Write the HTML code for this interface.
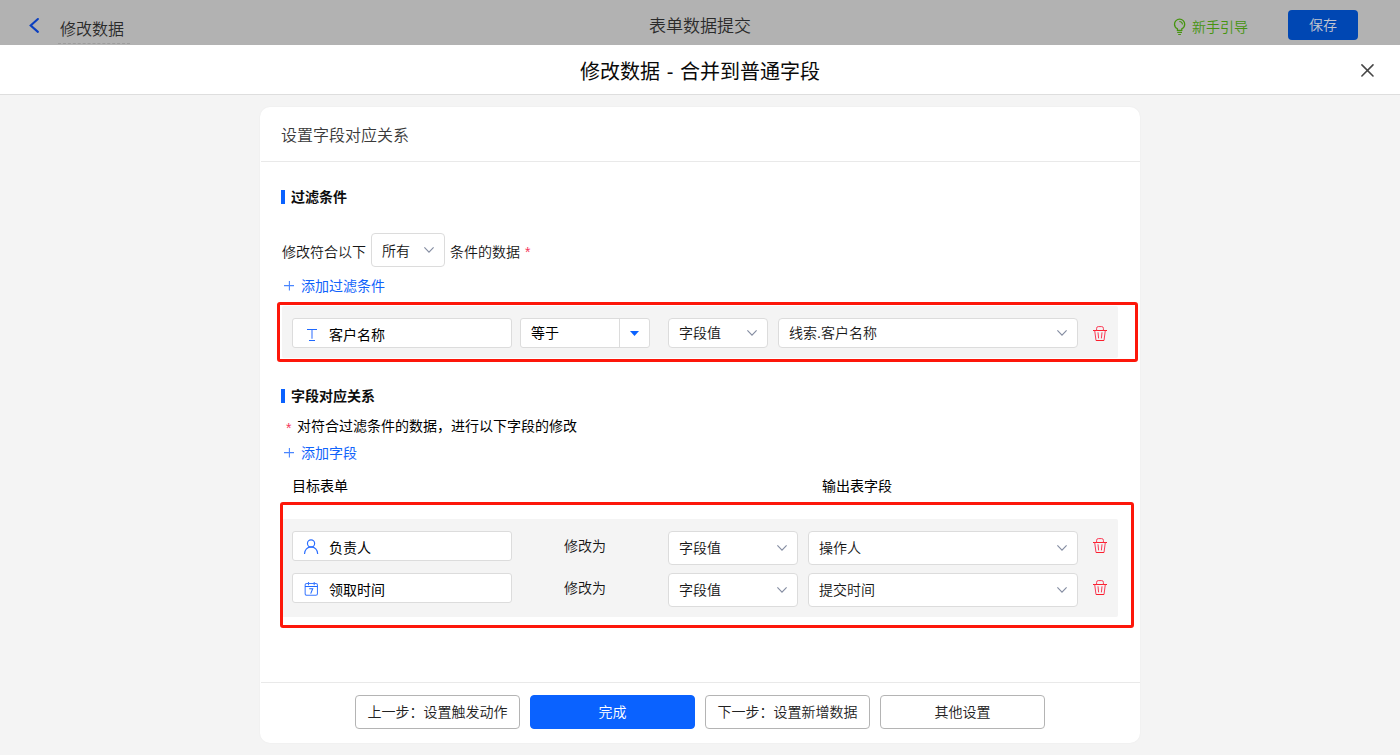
<!DOCTYPE html>
<html lang="zh-CN">
<head>
<meta charset="utf-8">
<title>修改数据 - 合并到普通字段</title>
<style>
*{box-sizing:border-box;margin:0;padding:0}
html,body{width:1400px;height:755px;overflow:hidden;background:#f4f4f4}
body{position:relative;font-family:"Liberation Sans","Noto Sans CJK SC",sans-serif;font-size:14px;color:#1f1f1f;font-weight:350}
.a{position:absolute}
.t{position:absolute;white-space:nowrap;line-height:20px;height:20px}
svg{position:absolute;overflow:visible}
/* top bar */
#bar{left:0;top:0;width:1400px;height:45px;background:#b2b2b2}
#mh{left:0;top:45px;width:1400px;height:50px;background:#fff;border-bottom:1px solid #dedede}
#card{left:260px;top:107px;width:880px;height:636px;background:#fff;border-radius:10px;box-shadow:0 0 2px rgba(0,0,0,.05)}
.hr{position:absolute;left:261px;width:879px;height:1px;background:#e9e9e9}
.bar4{position:absolute;left:281px;width:4px;height:14px;background:#0a62ff}
.b{font-weight:700;color:#0d0d0d}
.blue{color:#1163fb;font-weight:400}
.red{color:#f5365c}
.box{position:absolute;background:#fff;border:1px solid #dcdcdc;border-radius:4px}
.inp{border-radius:3px}
.hl{position:absolute;border:3px solid #fd170a;border-radius:3px}
.row{position:absolute;background:#f4f4f4;border-radius:2px}
.btn{position:absolute;top:695px;width:165px;height:34px;border:1px solid #b4b4b4;border-radius:4px;background:#fff;text-align:center;line-height:32px;color:#222;white-space:nowrap}
.btn.p{background:#0a62ff;border-color:#0a62ff;color:#fff}
.g{color:#161616}
</style>
</head>
<body>
<!-- underlying page header (dimmed) -->
<div id="bar" class="a"></div>
<svg style="left:29px;top:18px" width="10" height="15" viewBox="0 0 10 15"><path d="M8.9 1 L1.7 7.45 L8.9 13.9" fill="none" stroke="#0b3fc0" stroke-width="2.1" stroke-linecap="round"/></svg>
<div class="t" style="left:60px;top:20px;font-size:16px;color:#2a2a2a">修改数据</div>
<div class="a" style="left:58px;top:43px;width:72px;height:1px;border-top:1px dashed #9d9d9d"></div>
<div class="t" style="left:600px;width:200px;text-align:center;top:17px;font-size:17px;color:#2a2a2a">表单数据提交</div>
<svg style="left:1173px;top:18px" width="14" height="18" viewBox="0 0 14 18"><path d="M4.4 12.3 V10.8 C2.6 9.8 1.5 8.1 1.5 6.2 A5.1 5.1 0 0 1 11.7 6.2 C11.7 8.1 10.6 9.8 8.8 10.8 V12.3 Z" fill="none" stroke="#46940f" stroke-width="1.3"/><path d="M4.2 14.4 H9 M5.2 16.5 H7.9" fill="none" stroke="#46940f" stroke-width="1.1"/><path d="M6.3 3.5 A3.1 3.1 0 0 1 9.4 6.6" fill="none" stroke="#46940f" stroke-width="1.1"/></svg>
<div class="t" style="left:1192px;top:17px;color:#46940f">新手引导</div>
<div class="a" style="left:1288px;top:10px;width:70px;height:30px;border-radius:4px;background:#0047b3"></div>
<div class="t" style="left:1288px;width:70px;text-align:center;top:15px;color:#c3c6cf">保存</div>

<!-- modal header -->
<div id="mh" class="a"></div>
<div class="t" style="left:500px;width:400px;text-align:center;top:60px;height:24px;line-height:24px;font-size:20px;color:#0a0a0a;font-weight:400;word-spacing:1.1px">修改数据 - 合并到普通字段</div>
<svg style="left:1361px;top:63.5px" width="13" height="13" viewBox="0 0 13 13"><path d="M0.9 0.9 L12 12 M12 0.9 L0.9 12" fill="none" stroke="#474747" stroke-width="1.6" stroke-linecap="round"/></svg>

<!-- card -->
<div id="card" class="a"></div>
<div class="t" style="left:281px;top:126px;font-size:16px;color:#3a3a3a">设置字段对应关系</div>
<div class="hr" style="top:161px"></div>

<!-- section 1 -->
<div class="bar4" style="top:190px"></div>
<div class="t b" style="left:291px;top:187px">过滤条件</div>
<div class="t g" style="left:282px;top:241.5px">修改符合以下</div>
<div class="box" style="left:371px;top:233px;width:74px;height:34px"></div>
<div class="t g" style="left:382px;top:240.5px">所有</div>
<svg style="left:423.7px;top:247px" width="10" height="6" viewBox="0 0 10 6"><path d="M0.4 0.4 L5 5.1 L9.6 0.4" fill="none" stroke="#858da2" stroke-width="1.15"/></svg>
<div class="t g" style="left:450px;top:241.5px">条件的数据</div>
<div class="t red" style="left:525px;top:242px;font-size:14px">*</div>
<svg style="left:284px;top:281px" width="10" height="10" viewBox="0 0 10 10"><path d="M5.4 0 V9.6 M0 4.6 H10" fill="none" stroke="#4a86ff" stroke-width="1.1"/></svg>
<div class="t blue" style="left:301px;top:276px">添加过滤条件</div>

<div class="row" style="left:282px;top:306px;width:836px;height:52px"></div>
<div class="box inp" style="left:292px;top:318px;width:220px;height:30px"></div>
<svg style="left:307px;top:328px" width="10" height="13" viewBox="0 0 10 13"><path d="M0 1.5 H10 M2 12.5 H8" fill="none" stroke="#1f69ff" stroke-width="1"/><path d="M5 2 V10.8" fill="none" stroke="#5b8dff" stroke-width="1.3"/></svg>
<div class="t" style="left:329px;top:325px;color:#000;font-weight:400">客户名称</div>
<div class="box inp" style="left:520px;top:318px;width:130px;height:30px"></div>
<div class="a" style="left:619px;top:319px;width:1px;height:28px;background:#dcdcdc"></div>
<div class="t" style="left:531px;top:323px;color:#000;font-weight:400">等于</div>
<svg style="left:630px;top:331px" width="9" height="5" viewBox="0 0 9 5"><path d="M0 0 H9 L4.5 5 Z" fill="#0a62ff"/></svg>
<div class="box" style="left:668px;top:318px;width:100px;height:30px"></div>
<div class="t g" style="left:679px;top:323px">字段值</div>
<svg style="left:747.1px;top:330px" width="10" height="6" viewBox="0 0 10 6"><path d="M0.4 0.4 L5 5.1 L9.6 0.4" fill="none" stroke="#858da2" stroke-width="1.15"/></svg>
<div class="box" style="left:778px;top:318px;width:300px;height:30px"></div>
<div class="t g" style="left:789px;top:323px">线索.客户名称</div>
<svg style="left:1057.1px;top:330px" width="10" height="6" viewBox="0 0 10 6"><path d="M0.4 0.4 L5 5.1 L9.6 0.4" fill="none" stroke="#858da2" stroke-width="1.15"/></svg>
<svg class="trash" style="left:1093px;top:326px" width="14" height="15" viewBox="0 0 14 15"><path d="M0 4.5 H14 M3 14.5 H11" fill="none" stroke="#fb1f2c" stroke-width="1"/><path d="M1.7 4.5 L3 14.5 M11 14.5 L12.3 4.5 M3.6 4.5 V2.3 Q3.6 0.6 5.3 0.6 H8.7 Q10.4 0.6 10.4 2.3 V4.5 M5 6.3 L5.6 12.4 M9 6.3 L8.4 12.4" fill="none" stroke="#fb3a55" stroke-width="1"/></svg>
<div class="hl" style="left:277px;top:302px;width:861px;height:60px"></div>

<!-- section 2 -->
<div class="bar4" style="top:389px"></div>
<div class="t b" style="left:291px;top:386px">字段对应关系</div>
<div class="t red" style="left:286px;top:418px;font-size:14px">*</div>
<div class="t" style="left:297px;top:416px;color:#000;font-weight:400">对符合过滤条件的数据，进行以下字段的修改</div>
<svg style="left:284px;top:448px" width="10" height="10" viewBox="0 0 10 10"><path d="M5.4 0 V9.6 M0 4.6 H10" fill="none" stroke="#4a86ff" stroke-width="1.1"/></svg>
<div class="t blue" style="left:301px;top:443px">添加字段</div>
<div class="t" style="left:292px;top:476px;color:#000;font-weight:400">目标表单</div>
<div class="t" style="left:822px;top:476px;color:#000;font-weight:400">输出表字段</div>

<div class="row" style="left:282px;top:519px;width:836px;height:97.5px"></div>
<!-- row 1 -->
<div class="box inp" style="left:292px;top:531px;width:220px;height:30px"></div>
<svg style="left:304px;top:539px" width="15" height="16" viewBox="0 0 15 16"><circle cx="7.05" cy="4.5" r="3.6" fill="none" stroke="#2b6eff" stroke-width="1.15"/><path d="M0.5 15 A6.6 7.1 0 0 1 13.7 15" fill="none" stroke="#2b6eff" stroke-width="1.15"/></svg>
<div class="t" style="left:329px;top:538px;color:#000;font-weight:400">负责人</div>
<div class="t g" style="left:564px;top:536px">修改为</div>
<div class="box" style="left:668px;top:531px;width:130px;height:34px"></div>
<div class="t g" style="left:679px;top:538px">字段值</div>
<svg style="left:777.1px;top:545px" width="10" height="6" viewBox="0 0 10 6"><path d="M0.4 0.4 L5 5.1 L9.6 0.4" fill="none" stroke="#858da2" stroke-width="1.15"/></svg>
<div class="box" style="left:808px;top:531px;width:270px;height:34px"></div>
<div class="t g" style="left:819px;top:538px">操作人</div>
<svg style="left:1057.1px;top:545px" width="10" height="6" viewBox="0 0 10 6"><path d="M0.4 0.4 L5 5.1 L9.6 0.4" fill="none" stroke="#858da2" stroke-width="1.15"/></svg>
<svg class="trash" style="left:1093px;top:538px" width="14" height="15" viewBox="0 0 14 15"><path d="M0 4.5 H14 M3 14.5 H11" fill="none" stroke="#fb1f2c" stroke-width="1"/><path d="M1.7 4.5 L3 14.5 M11 14.5 L12.3 4.5 M3.6 4.5 V2.3 Q3.6 0.6 5.3 0.6 H8.7 Q10.4 0.6 10.4 2.3 V4.5 M5 6.3 L5.6 12.4 M9 6.3 L8.4 12.4" fill="none" stroke="#fb3a55" stroke-width="1"/></svg>
<!-- row 2 -->
<div class="box inp" style="left:292px;top:573px;width:220px;height:30px"></div>
<svg style="left:304px;top:581px" width="15" height="15" viewBox="0 0 15 15"><rect x="1.15" y="2.5" width="12.3" height="11.8" rx="1.6" fill="none" stroke="#3d7aff" stroke-width="1.05"/><path d="M1 5.5 H13.5" fill="none" stroke="#1f69ff" stroke-width="1"/><path d="M4.5 0.9 V4.2 M10.2 0.9 V4.2" fill="none" stroke="#3d7aff" stroke-width="1.05"/><path d="M5.2 7.7 H8.7 L6.7 12.6" fill="none" stroke="#1f69ff" stroke-width="1.05"/></svg>
<div class="t" style="left:329px;top:580px;color:#000;font-weight:400">领取时间</div>
<div class="t g" style="left:564px;top:578px">修改为</div>
<div class="box" style="left:668px;top:573px;width:130px;height:34px"></div>
<div class="t g" style="left:679px;top:580px">字段值</div>
<svg style="left:777.1px;top:587px" width="10" height="6" viewBox="0 0 10 6"><path d="M0.4 0.4 L5 5.1 L9.6 0.4" fill="none" stroke="#858da2" stroke-width="1.15"/></svg>
<div class="box" style="left:808px;top:573px;width:270px;height:34px"></div>
<div class="t g" style="left:819px;top:580px">提交时间</div>
<svg style="left:1057.1px;top:587px" width="10" height="6" viewBox="0 0 10 6"><path d="M0.4 0.4 L5 5.1 L9.6 0.4" fill="none" stroke="#858da2" stroke-width="1.15"/></svg>
<svg class="trash" style="left:1093px;top:580px" width="14" height="15" viewBox="0 0 14 15"><path d="M0 4.5 H14 M3 14.5 H11" fill="none" stroke="#fb1f2c" stroke-width="1"/><path d="M1.7 4.5 L3 14.5 M11 14.5 L12.3 4.5 M3.6 4.5 V2.3 Q3.6 0.6 5.3 0.6 H8.7 Q10.4 0.6 10.4 2.3 V4.5 M5 6.3 L5.6 12.4 M9 6.3 L8.4 12.4" fill="none" stroke="#fb3a55" stroke-width="1"/></svg>
<div class="hl" style="left:280px;top:502px;width:854px;height:126px"></div>

<!-- footer -->
<div class="hr" style="top:682px"></div>
<div class="btn" style="left:355px">上一步：设置触发动作</div>
<div class="btn p" style="left:530px">完成</div>
<div class="btn" style="left:705px">下一步：设置新增数据</div>
<div class="btn" style="left:880px">其他设置</div>
</body>
</html>
